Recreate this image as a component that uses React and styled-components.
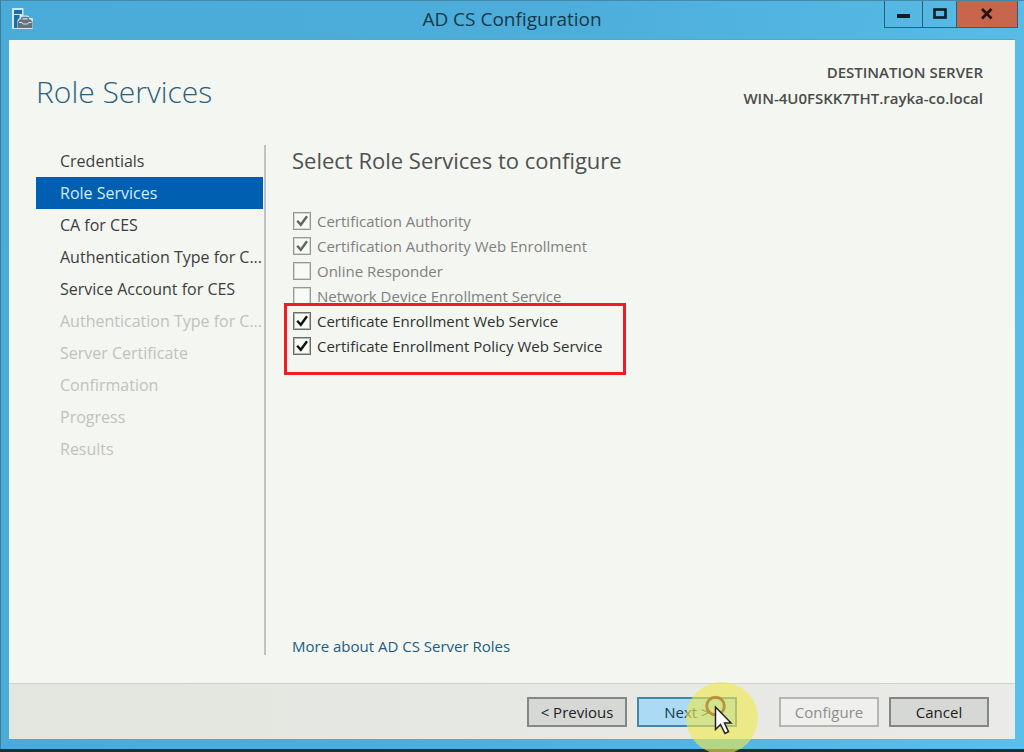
import React, { useState } from 'react';
import styled, { createGlobalStyle, css } from 'styled-components';

const GlobalStyle = createGlobalStyle`
  * {
    box-sizing: border-box;
  }
  body {
    margin: 0;
    background-color: #1f2f35;
    font-family: 'Open Sans', 'Noto Sans', sans-serif;
    font-size: 15px;
    line-height: 20px;
    color: #3c3e3d;
  }
`;

const Page = styled.div`
  min-height: 100vh;
  padding-bottom: 3px;
  display: flex;
`;

const Window = styled.div`
  flex: 1;
  min-width: 0;
  display: flex;
  flex-direction: column;
  padding: 0 9px 10px 8px;
  border-top: 1px solid #4688a6;
  border-left: 1px solid #3f7f93;
  background: linear-gradient(100deg, #49abd8 0%, #4daedb 50%, #5abfe9 100%);
`;

const TitleBar = styled.header`
  display: grid;
  grid-template-columns: 1fr auto 1fr;
  height: 39px;
  border-bottom: 1px solid #6f9fb2;
`;

const AppIcon = styled.svg`
  width: 24px;
  height: 24px;
  margin: 6px 2px;
`;

const WindowTitle = styled.h1`
  margin: 0;
  font-size: 19px;
  font-weight: 400;
  line-height: 37px;
  color: #15384a;
`;

const WindowControls = styled.div`
  justify-self: end;
  display: flex;
  height: 27px;
  margin-right: -3px;
  border: 1px solid #2b5f78;
  border-top: none;
`;

const ControlButton = styled.button`
  width: ${props => props.$width}px;
  padding: 0;
  border: none;
  border-left: ${props => (props.$first ? 'none' : '1px solid #2b5f78')};
  background-color: ${props => (props.$close ? '#c9654c' : 'transparent')};
  svg {
    display: block;
    margin: 0 auto;
  }
`;

const Panel = styled.div`
  flex: 1;
  display: flex;
  flex-direction: column;
  background-color: #f4f6f1;
`;

const PageHeader = styled.div`
  display: flex;
  justify-content: space-between;
  padding: 19px 32px 0 27px;
  height: 105px;
`;

const PageTitle = styled.h2`
  margin: 0;
  padding-top: 13px;
  font-size: 30px;
  font-weight: 300;
  line-height: 40px;
  color: #2c617a;
`;

const Destination = styled.div`
  text-align: right;
  font-weight: 600;
  line-height: 26px;
  color: #4a4c4a;
`;

const Main = styled.div`
  flex: 1;
  display: flex;
  padding: 0 32px 28px 27px;
`;

const Steps = styled.nav`
  width: 230px;
  padding-right: 1px;
  border-right: 2px solid #c2c4c1;
`;

const StepList = styled.ul`
  margin: 0;
  padding: 0;
  list-style: none;
`;

const Step = styled.a`
  display: block;
  padding: 0 0 0 24px;
  font-size: 16px;
  line-height: 32px;
  white-space: nowrap;
  text-decoration: none;
  color: ${props => (props.$disabled ? '#c0c2be' : '#3c3e3d')};
  ${props =>
    props.$active &&
    css`
      background-color: #005fb0;
      color: #d3ecfa;
    `}
`;

const Content = styled.section`
  flex: 1;
  display: flex;
  flex-direction: column;
  align-items: flex-start;
  padding: 0 0 0 26px;
`;

const ContentTitle = styled.h3`
  margin: 0 0 33px;
  font-size: 22px;
  font-weight: 400;
  line-height: 30px;
  color: #4e5150;
`;

const Options = styled.div`
  padding-left: 1px;
`;

const Highlight = styled.div`
  position: relative;
  &::after {
    content: '';
    position: absolute;
    inset: -5px -24px -17px -9px;
    border: 3px solid #f01c24;
    pointer-events: none;
  }
`;

const Option = styled.label`
  display: flex;
  align-items: center;
  gap: 6px;
  height: 25px;
  white-space: nowrap;
  color: ${props => (props.$disabled ? '#7f817e' : '#2f3130')};
`;

const CheckWrapper = styled.span`
  display: grid;
  color: ${props => (props.$disabled ? '#636562' : '#111')};
  > * {
    grid-area: 1 / 1;
  }
  svg {
    pointer-events: none;
  }
`;

const CheckInput = styled.input`
  appearance: none;
  width: 18px;
  height: 18px;
  margin: 0;
  border: 1px solid #6c6e6c;
  background-color: #f8faf6;
  box-shadow: inset 0 0 0 1px #b4b6b2;
  &:disabled {
    border-color: #969894;
    box-shadow: inset 0 0 0 1px #d4d6d2;
  }
`;

const MoreLink = styled.a`
  margin-top: auto;
  margin-bottom: -1px;
  text-decoration: none;
  color: #215d84;
`;

const Footer = styled.footer`
  display: flex;
  justify-content: flex-end;
  gap: 10px;
  padding: 13px 26px 12px;
  border-top: 1px solid #cfd1cd;
  background: linear-gradient(90deg, #e3e5df, #eaebe8);
`;

const FooterButton = styled.button`
  width: 100px;
  height: 30px;
  padding: 0;
  border: 2px solid #858785;
  background-color: #d6d8d5;
  font: inherit;
  color: #222;
  &:disabled {
    border-color: #b4b6b3;
    background-color: #eff0ed;
    color: #8d8f8c;
  }
  ${props =>
    props.$primary &&
    css`
      border-color: #4487ad;
      background-color: #abdaf4;
      color: #17394c;
    `}
`;

const NextWrapper = styled.div`
  position: relative;
  margin-right: 32px;
`;

const Pointer = styled.svg`
  position: absolute;
  left: 48px;
  top: -16px;
  width: 74px;
  height: 74px;
  pointer-events: none;
`;

const steps = [
  { label: 'Credentials' },
  { label: 'Role Services', active: true },
  { label: 'CA for CES' },
  { label: 'Authentication Type for C...' },
  { label: 'Service Account for CES' },
  { label: 'Authentication Type for C...', disabled: true },
  { label: 'Server Certificate', disabled: true },
  { label: 'Confirmation', disabled: true },
  { label: 'Progress', disabled: true },
  { label: 'Results', disabled: true }
];

const RoleOption = ({ label, initial, disabled }) => {
  const [checked, setChecked] = useState(Boolean(initial));
  return (
    <Option $disabled={disabled}>
      <CheckWrapper $disabled={disabled}>
        <CheckInput
          type="checkbox"
          checked={checked}
          disabled={disabled}
          onChange={event => setChecked(event.target.checked)}
        />
        {checked && (
          <svg width="18" height="18" viewBox="0 0 18 18" aria-hidden="true">
            <path
              d="M4.2 8.8L7.8 12.8L14 4.2"
              fill="none"
              stroke="currentColor"
              strokeWidth="2.4"
            />
          </svg>
        )}
      </CheckWrapper>
      {label}
    </Option>
  );
};

const App = () => (
  <Page>
    <GlobalStyle />
    <Window>
      <TitleBar>
        <AppIcon viewBox="0 0 24 24" aria-hidden="true">
          <path
            d="M1.5 1.5h10.500v7.500h5l1.500 2.500h3v10h-20z"
            fill="#cfe8f3"
            stroke="#cfe8f3"
            strokeLinejoin="round"
          />
          <path d="M3 3h8v4H3zM3 8h5.500v3L6.500 13v8H3z" fill="#1f6da8" />
          <path
            d="M10.5 13v-1q0-1.500 1.500-1.500h4q1.500 0 1.500 1.500v1"
            fill="none"
            stroke="#65717f"
            strokeWidth="1.5"
          />
          <path d="M8.500 12.500h11l2 2.500v6H7v-6z" fill="#65717f" />
          <path d="M8 15.500h3l1 1.500h4.500l1-1.500h3" fill="none" stroke="#d5e2ea" />
        </AppIcon>
        <WindowTitle>AD CS Configuration</WindowTitle>
        <WindowControls>
          <ControlButton $width={37} $first aria-label="Minimize">
            <svg width="14" height="14" viewBox="0 0 14 14">
              <rect x="0" y="7" width="13" height="4" fill="#0c1d26" />
            </svg>
          </ControlButton>
          <ControlButton $width={34} aria-label="Maximize">
            <svg width="14" height="14" viewBox="0 0 14 14">
              <rect
                x="1.5"
                y="2.5"
                width="11"
                height="8"
                fill="none"
                stroke="#0c1d26"
                strokeWidth="2.6"
              />
            </svg>
          </ControlButton>
          <ControlButton $width={61} $close aria-label="Close">
            <svg width="14" height="14" viewBox="0 0 14 14">
              <path
                d="M2 2l9.5 9.5M11.5 2l-9.5 9.5"
                stroke="#241310"
                strokeWidth="2.8"
              />
            </svg>
          </ControlButton>
        </WindowControls>
      </TitleBar>
      <Panel>
        <PageHeader>
          <PageTitle>Role Services</PageTitle>
          <Destination>
            DESTINATION SERVER
            <br />
            WIN-4U0FSKK7THT.rayka-co.local
          </Destination>
        </PageHeader>
        <Main>
          <Steps>
            <StepList>
              {steps.map((step, index) => (
                <li key={index}>
                  <Step
                    href={`#step-${index + 1}`}
                    $active={step.active}
                    $disabled={step.disabled}
                  >
                    {step.label}
                  </Step>
                </li>
              ))}
            </StepList>
          </Steps>
          <Content>
            <ContentTitle>Select Role Services to configure</ContentTitle>
            <Options>
              <RoleOption label="Certification Authority" initial disabled />
              <RoleOption
                label="Certification Authority Web Enrollment"
                initial
                disabled
              />
              <RoleOption label="Online Responder" disabled />
              <RoleOption label="Network Device Enrollment Service" disabled />
              <Highlight>
                <RoleOption
                  label="Certificate Enrollment Web Service"
                  initial
                />
                <RoleOption
                  label="Certificate Enrollment Policy Web Service"
                  initial
                />
              </Highlight>
            </Options>
            <MoreLink href="#more">More about AD CS Server Roles</MoreLink>
          </Content>
        </Main>
        <Footer>
          <FooterButton>&lt; Previous</FooterButton>
          <NextWrapper>
            <FooterButton $primary>Next &gt;</FooterButton>
            <Pointer viewBox="0 0 74 74" aria-hidden="true">
              <circle cx="37" cy="37" r="36" fill="#efe94c" opacity="0.62" />
              <circle
                cx="30.5"
                cy="25"
                r="8.8"
                fill="none"
                stroke="#b3882f"
                strokeWidth="3"
                opacity="0.85"
              />
              <path
                d="M30.5 26v22.500l5-5 4.500 9 3.500-1.800-4-8.700h6.500z"
                fill="#fff"
                stroke="#222"
                strokeWidth="1.5"
              />
            </Pointer>
          </NextWrapper>
          <FooterButton disabled>Configure</FooterButton>
          <FooterButton>Cancel</FooterButton>
        </Footer>
      </Panel>
    </Window>
  </Page>
);

export default App;
